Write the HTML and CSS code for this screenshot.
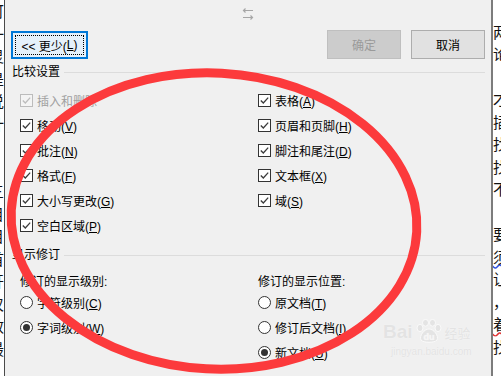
FILE: index.html
```html
<!DOCTYPE html>
<html lang="zh-CN">
<head>
  <meta charset="UTF-8">
  <title>比较文档</title>
  <link rel="stylesheet" href="styles.css">
</head>
<body>
<div class="screen">

  <!-- document behind the dialog, left edge -->
  <div class="doc doc-left">
    <p>可<br>一<br>灵<br>是<br>说<br>计<br><br><br>三<br>目<br>目<br>首<br>开<br>叹<br>效<br>最</p>
  </div>

  <div class="dialog">
    <div class="titlebar">
      <svg class="swap" width="12" height="12" viewBox="0 0 12 12">
        <path d="M1.5 2.5H11M3.5 0.5L1.5 2.5L3.5 4.5" fill="none" stroke="#a6a6a6" stroke-width="1.2"/>
        <path d="M1 9.5H10.5M8.5 7.5L10.5 9.5L8.5 11.5" fill="none" stroke="#a6a6a6" stroke-width="1.2"/>
      </svg>
    </div>

    <div class="actions">
      <button class="btn btn-less"><span class="focus">&lt;&lt; 更少(<u>L</u>)</span></button>
      <div class="spacer"></div>
      <button class="btn btn-ok" disabled>确定</button>
      <button class="btn">取消</button>
    </div>

    <div class="group-title"><span>比较设置</span><i></i></div>
    <div class="options">
      <label class="check disabled"><span class="box"><svg width="11" height="11" viewBox="0 0 11 11"><path d="M1.8 5.5L4.3 8L9.2 2.6"/></svg></span><span>插入和删除</span></label>
      <label class="check"><span class="box"><svg width="11" height="11" viewBox="0 0 11 11"><path d="M1.8 5.5L4.3 8L9.2 2.6"/></svg></span><span>表格(<u>A</u>)</span></label>
      <label class="check"><span class="box"><svg width="11" height="11" viewBox="0 0 11 11"><path d="M1.8 5.5L4.3 8L9.2 2.6"/></svg></span><span>移动(<u>V</u>)</span></label>
      <label class="check"><span class="box"><svg width="11" height="11" viewBox="0 0 11 11"><path d="M1.8 5.5L4.3 8L9.2 2.6"/></svg></span><span>页眉和页脚(<u>H</u>)</span></label>
      <label class="check"><span class="box"><svg width="11" height="11" viewBox="0 0 11 11"><path d="M1.8 5.5L4.3 8L9.2 2.6"/></svg></span><span>批注(<u>N</u>)</span></label>
      <label class="check"><span class="box"><svg width="11" height="11" viewBox="0 0 11 11"><path d="M1.8 5.5L4.3 8L9.2 2.6"/></svg></span><span>脚注和尾注(<u>D</u>)</span></label>
      <label class="check"><span class="box"><svg width="11" height="11" viewBox="0 0 11 11"><path d="M1.8 5.5L4.3 8L9.2 2.6"/></svg></span><span>格式(<u>F</u>)</span></label>
      <label class="check"><span class="box"><svg width="11" height="11" viewBox="0 0 11 11"><path d="M1.8 5.5L4.3 8L9.2 2.6"/></svg></span><span>文本框(<u>X</u>)</span></label>
      <label class="check"><span class="box"><svg width="11" height="11" viewBox="0 0 11 11"><path d="M1.8 5.5L4.3 8L9.2 2.6"/></svg></span><span>大小写更改(<u>G</u>)</span></label>
      <label class="check"><span class="box"><svg width="11" height="11" viewBox="0 0 11 11"><path d="M1.8 5.5L4.3 8L9.2 2.6"/></svg></span><span>域(<u>S</u>)</span></label>
      <label class="check"><span class="box"><svg width="11" height="11" viewBox="0 0 11 11"><path d="M1.8 5.5L4.3 8L9.2 2.6"/></svg></span><span>空白区域(<u>P</u>)</span></label>
    </div>

    <div class="group-title group-show"><span>显示修订</span><i></i></div>
    <div class="show">
      <div class="col">
        <div class="caption">修订的显示级别:</div>
        <label class="radio"><span class="dot"></span><span>字符级别(<u>C</u>)</span></label>
        <label class="radio on"><span class="dot"></span><span>字词级别(<u>W</u>)</span></label>
      </div>
      <div class="col">
        <div class="caption">修订的显示位置:</div>
        <label class="radio"><span class="dot"></span><span>原文档(<u>T</u>)</span></label>
        <label class="radio"><span class="dot"></span><span>修订后文档(<u>I</u>)</span></label>
        <label class="radio on"><span class="dot"></span><span>新文档(<u>U</u>)</span></label>
      </div>
    </div>

    <!-- site watermark -->
    <div class="watermark">
      <div class="wm-logo">
        <span class="wm-bai">Bai</span>
        <svg width="30" height="24" viewBox="0 0 30 24">
          <g fill="#e4e4e4" stroke="#fafafa" stroke-width="1">
            <ellipse cx="6" cy="9" rx="3" ry="3.6"/>
            <ellipse cx="11.5" cy="3.8" rx="3" ry="3.4"/>
            <ellipse cx="18.5" cy="3.8" rx="3" ry="3.4"/>
            <ellipse cx="24" cy="9" rx="3" ry="3.6"/>
            <path d="M15 10C10 10 5 17 7 21C9 24 21 24 23 21C25 17 20 10 15 10Z"/>
          </g>
          <text x="15" y="20.5" text-anchor="middle" class="wm-du">du</text>
        </svg>
        <span class="wm-jy">经验</span>
      </div>
      <div class="wm-url">jingyan.baidu.com</div>
    </div>
  </div>

  <!-- document behind the dialog, right edge -->
  <div class="doc doc-right">
    <p><br>两<br>论<br><br>才<br>插<br>找<br>找<br>不<br><br>要<br><span class="wavy-blue">须</span><br>让<br>，<br><span class="wavy-red">着</span><br>找</p>
  </div>

  <!-- red marker ellipse drawn over the screenshot -->
  <svg class="marker" width="501" height="376" viewBox="0 0 501 376">
    <ellipse cx="214" cy="221" rx="203" ry="148" transform="rotate(3 214 221)" fill="none" stroke="#fc3a3c" stroke-width="9"/>
  </svg>
</div>
</body>
</html>
```

FILE: styles.css
```css
body {
  margin: 0;
  font-family: "Liberation Sans", "Noto Sans CJK SC", sans-serif;
  font-size: 12px;
  color: #000;
  background: #fff;
}
.screen {
  position: relative;
  width: 501px;
  height: 376px;
  display: flex;
  overflow: hidden;
}

/* document strips */
.doc {
  flex: none;
  overflow: hidden;
  background: #fff;
  font-family: "Noto Sans CJK SC", sans-serif;
  font-size: 15px;
  line-height: 22.5px;
  color: #111;
}
.doc p {
  margin: 0;
}
.doc-left {
  width: 4px;
  border-right: 1px solid #4a4a4a;
}
.doc-left p {
  margin-left: -11px;
  width: 15px;
}
.doc-right {
  width: 8px;
  border-left: 2px solid #7c7c7c;
}
.doc-right p {
  margin-top: -2px;
  width: 16px;
}
.wavy-blue {
  text-decoration: underline wavy #3050e0;
}
.wavy-red {
  text-decoration: underline wavy #e03030;
}

/* dialog */
.dialog {
  position: relative;
  flex: none;
  width: 486px;
  box-sizing: border-box;
  padding: 0 6px;
  background: #f0f0f0;
}
.titlebar {
  height: 30px;
  box-sizing: border-box;
  padding-top: 8px;
  display: flex;
  justify-content: center;
}
.actions {
  display: flex;
  gap: 10px;
  height: 29px;
}
.spacer {
  flex: 1;
}
.btn {
  width: 74px;
  height: 29px;
  padding: 0;
  font: inherit;
  color: #000;
  background: #e1e1e1;
  border: 1px solid #adadad;
}
.btn-less {
  width: 77px;
  height: 28px;
  margin-top: 1px;
  padding: 2px;
  background: #e5f1fb;
  border: 2px solid #0078d7;
}
.btn-less .focus {
  display: flex;
  align-items: center;
  justify-content: center;
  height: 100%;
  box-sizing: border-box;
  border: 1px dotted #000;
}
.btn-ok {
  background: #cccccc;
  border-color: #bfbfbf;
  color: #9a9a9a;
}
u {
  text-underline-offset: 1px;
}

.group-title {
  display: flex;
  align-items: center;
  height: 16px;
  margin-top: 5px;
  padding-left: 1px;
}
.group-title span {
  line-height: 16px;
}
.group-title i {
  flex: 1;
  height: 1px;
  margin-left: 4px;
  background: #dcdcdc;
}
.group-show {
  margin-top: 9px;
}

.options {
  display: grid;
  grid-template-columns: 238px 1fr;
  grid-auto-rows: 25px;
  margin: 8px 0 0 9px;
}
.check,
.radio {
  display: flex;
  align-items: center;
  gap: 4px;
  height: 25px;
  white-space: nowrap;
}
.box {
  display: flex;
  width: 13px;
  height: 13px;
  box-sizing: border-box;
  border: 1px solid #333;
  background: #fff;
}
.box path {
  fill: none;
  stroke: #3c3c3c;
  stroke-width: 1.3;
}
.check.disabled {
  color: #a0a0a0;
}
.check.disabled .box {
  border-color: #bcbcbc;
  background: #f4f4f4;
}
.check.disabled .box path {
  stroke: #bcbcbc;
}

.show {
  display: grid;
  grid-template-columns: 238px 1fr;
  margin: 11px 0 0 9px;
}
.caption {
  height: 16px;
  line-height: 16px;
}
.dot {
  width: 13px;
  height: 13px;
  box-sizing: border-box;
  border: 1px solid #333;
  border-radius: 50%;
  background: #fff;
  display: flex;
  align-items: center;
  justify-content: center;
}
.radio.on .dot::after {
  content: "";
  width: 7px;
  height: 7px;
  border-radius: 50%;
  background: #333;
}

/* watermark */
.watermark {
  position: absolute;
  left: 378px;
  top: 319px;
  color: #e3e3e3;
  text-shadow: 0 0 1px #fafafa;
}
.wm-logo {
  display: flex;
  align-items: flex-end;
  gap: 1px;
}
.wm-bai {
  font-size: 19px;
  font-weight: bold;
  line-height: 22px;
}
.wm-du {
  font-family: "Liberation Sans", sans-serif;
  font-size: 9px;
  font-weight: bold;
  fill: #f6f6f6;
}
.wm-jy {
  font-family: "Noto Sans CJK SC", sans-serif;
  font-size: 13px;
  line-height: 20px;
}
.wm-url {
  margin: 3px 0 0 8px;
  font-size: 10px;
}

.marker {
  position: absolute;
  left: 0;
  top: 0;
  pointer-events: none;
}
```
